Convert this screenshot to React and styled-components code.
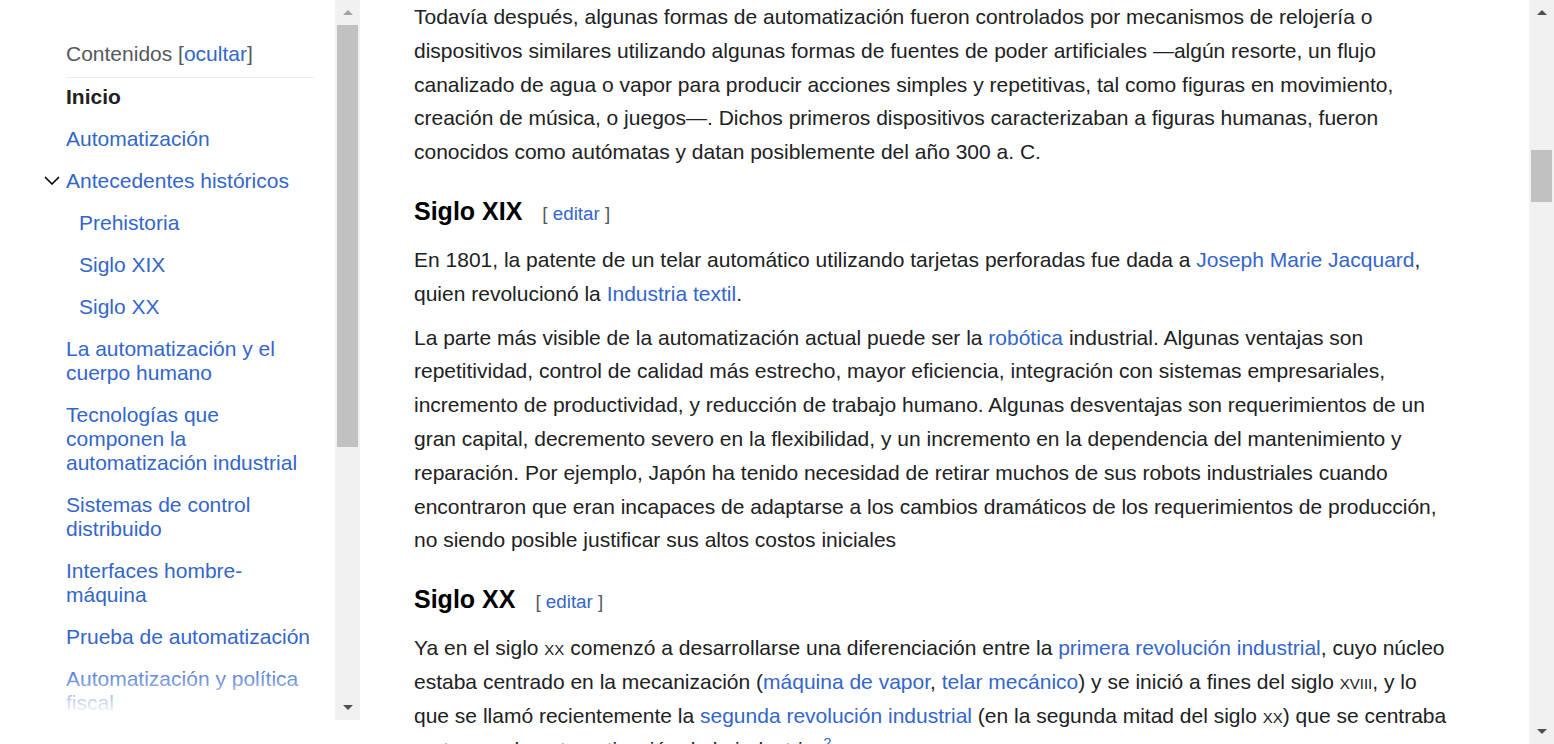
import React from 'react';
import styled, { createGlobalStyle } from 'styled-components';

const GlobalStyle = createGlobalStyle`
  html, body {
    margin: 0;
    padding: 0;
    background: #fff;
    overflow: hidden;
  }
  body {
    font-family: "Liberation Sans", Arial, sans-serif;
    color: #202122;
  }
`;

const Page = styled.div`
  display: flex;
  width: 100vw;
  height: 100vh;
  overflow: hidden;
`;

const LeftPane = styled.aside`
  display: flex;
  flex: none;
  height: 720px;
`;

const Toc = styled.nav`
  position: relative;
  width: 335px;
  box-sizing: border-box;
  padding: 42px 21px 0 66px;
  overflow: hidden;
  background: #fff;
`;

const TocHeader = styled.div`
  font-size: 21px;
  line-height: 24px;
  color: #54595d;
  padding-bottom: 11px;
  border-bottom: 1px solid #eaecf0;
`;

const TocList = styled.ul`
  list-style: none;
  margin: 7px 0 0;
  padding: 0;
  display: flex;
  flex-direction: column;
  gap: 18px;
`;

const TocItem = styled.li`
  font-size: 21px;
  line-height: 24px;
  padding-left: ${(p) => (p.$sub ? 13 : 0)}px;
  color: ${(p) => (p.$active ? '#202122' : '#3366cc')};
  font-weight: ${(p) => (p.$active ? 700 : 400)};
`;

const Toggle = styled.span`
  display: inline-block;
  width: 16px;
  margin-left: -22px;
  margin-right: 6px;
  vertical-align: 3px;
  svg { display: block; }
`;

const Link = styled.a`
  color: #3366cc;
  text-decoration: none;
`;

const Fade = styled.div`
  position: absolute;
  left: 0;
  right: 0;
  bottom: 0;
  height: 56px;
  background: linear-gradient(rgba(255, 255, 255, 0), #fff 92%);
  pointer-events: none;
`;

const Scrollbar = styled.div`
  flex: none;
  width: 25px;
  height: 100%;
  background: #f1f1f1;
  display: flex;
  flex-direction: column;
`;

const ScrollButton = styled.div`
  flex: none;
  height: 25px;
  display: flex;
  align-items: center;
  justify-content: center;
  &::before {
    content: '';
    width: 0;
    height: 0;
    border-left: 5px solid transparent;
    border-right: 5px solid transparent;
    ${(p) => (p.$down ? 'border-top' : 'border-bottom')}: 5px solid ${(p) => (p.$disabled ? '#a3a3a3' : '#505050')};
  }
`;

const ScrollTrack = styled.div`
  flex: 1;
  display: flex;
  flex-direction: column;
  align-items: center;
`;

const Thumb = styled.div`
  width: 21px;
  background: #c1c1c1;
`;

const Main = styled.main`
  flex: 1;
  min-width: 0;
  height: 100%;
  padding-left: 54px;
  overflow: hidden;
`;

const Article = styled.article`
  width: 1042px;
  font-size: 21px;
  line-height: 33.8px;
  color: #202122;
`;

const Para = styled.p`
  margin: 0 0 10px;
`;

const Heading = styled.h3`
  display: flex;
  align-items: baseline;
  gap: 20px;
  margin: 27px 0 14px;
  font-size: 25px;
  line-height: 30px;
  font-weight: 700;
  color: #000;
`;

const EditLink = styled.span`
  font-size: 18.8px;
  font-weight: 400;
  color: #54595d;
  a { color: #3366cc; text-decoration: none; }
`;

const SmallCaps = styled.span`
  font-variant: small-caps;
`;

const Ref = styled.sup`
  font-size: 15px;
  line-height: 1;
  color: #3366cc;
  vertical-align: 9px;
  margin-left: 3px;
`;

const tocItems = [
  { label: 'Inicio', active: true },
  { label: 'Automatización' },
  { label: 'Antecedentes históricos', toggle: true },
  { label: 'Prehistoria', sub: true },
  { label: 'Siglo XIX', sub: true },
  { label: 'Siglo XX', sub: true },
  { label: 'La automatización y el cuerpo humano' },
  { label: 'Tecnologías que componen la automatización industrial' },
  { label: 'Sistemas de control distribuido' },
  { label: 'Interfaces hombre-máquina' },
  { label: 'Prueba de automatización' },
  { label: 'Automatización y política fiscal' },
  { label: 'Véase también' },
];

const ScrollBarV = ({ top, size, upDisabled }) => (
  <Scrollbar>
    <ScrollButton $disabled={upDisabled} />
    <ScrollTrack>
      <Thumb style={{ marginTop: top, height: size }} />
    </ScrollTrack>
    <ScrollButton $down />
  </Scrollbar>
);

const Section = ({ title, children }) => (
  <>
    <Heading>
      <span>{title}</span>
      <EditLink>[ <a href="#">editar</a> ]</EditLink>
    </Heading>
    {children}
  </>
);

export default function App() {
  return (
    <>
      <GlobalStyle />
      <Page>
        <LeftPane>
          <Toc>
            <TocHeader>
              Contenidos [<Link href="#">ocultar</Link>]
            </TocHeader>
            <TocList>
              {tocItems.map((item) => (
                <TocItem key={item.label} $active={item.active} $sub={item.sub}>
                  {item.toggle && (
                    <Toggle>
                      <svg width="16" height="9" viewBox="0 0 16 9" fill="none">
                        <path d="M1 1l7 7 7-7" stroke="#000" strokeWidth="1.6" />
                      </svg>
                    </Toggle>
                  )}
                  {item.label}
                </TocItem>
              ))}
            </TocList>
            <Fade />
          </Toc>
          <ScrollBarV top={0} size={422} upDisabled />
        </LeftPane>

        <Main>
          <Article>
            <Para>
              Todavía después, algunas formas de automatización fueron controlados por mecanismos de relojería o
              dispositivos similares utilizando algunas formas de fuentes de poder artificiales —algún resorte, un flujo
              canalizado de agua o vapor para producir acciones simples y repetitivas, tal como figuras en movimiento,
              creación de música, o juegos—. Dichos primeros dispositivos caracterizaban a figuras humanas, fueron
              conocidos como autómatas y datan posiblemente del año 300 a. C.
            </Para>

            <Section title="Siglo XIX">
              <Para>
                En 1801, la patente de un telar automático utilizando tarjetas perforadas fue dada a{' '}
                <Link href="#">Joseph Marie Jacquard</Link>, quien revolucionó la <Link href="#">Industria textil</Link>.
              </Para>
              <Para>
                La parte más visible de la automatización actual puede ser la <Link href="#">robótica</Link> industrial.
                Algunas ventajas son repetitividad, control de calidad más estrecho, mayor eficiencia, integración con
                sistemas empresariales, incremento de productividad, y reducción de trabajo humano. Algunas desventajas
                son requerimientos de un gran capital, decremento severo en la flexibilidad, y un incremento en la
                dependencia del mantenimiento y reparación. Por ejemplo, Japón ha tenido necesidad de retirar muchos de
                sus robots industriales cuando encontraron que eran incapaces de adaptarse a los cambios dramáticos de
                los requerimientos de producción, no siendo posible justificar sus altos costos iniciales
              </Para>
            </Section>

            <Section title="Siglo XX">
              <Para>
                Ya en el siglo <SmallCaps>xx</SmallCaps> comenzó a desarrollarse una diferenciación entre la{' '}
                <Link href="#">primera revolución industrial</Link>, cuyo núcleo estaba centrado en la mecanización (
                <Link href="#">máquina de vapor</Link>, <Link href="#">telar mecánico</Link>) y se inició a fines del
                siglo <SmallCaps>xviii</SmallCaps>, y lo que se llamó recientemente la{' '}
                <Link href="#">segunda revolución industrial</Link> (en la segunda mitad del siglo{' '}
                <SmallCaps>xx</SmallCaps>) que se centraba en torno a la automatización de la industria.
                <Ref>2</Ref>
              </Para>
            </Section>
          </Article>
        </Main>

        <ScrollBarV top={125} size={52} />
      </Page>
    </>
  );
}
